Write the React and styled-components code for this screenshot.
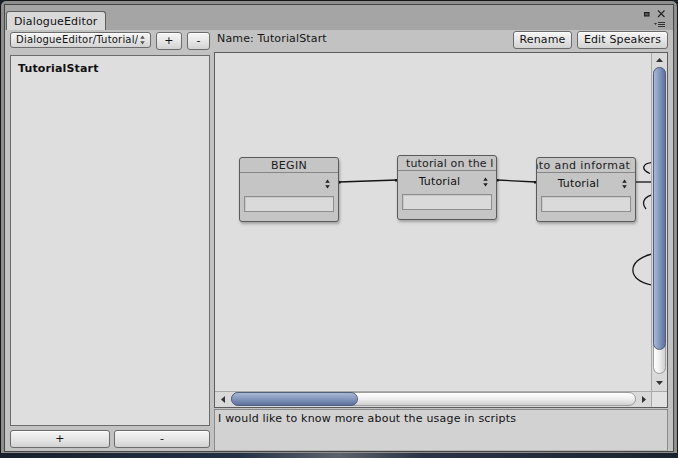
import React from 'react';
import styled, { createGlobalStyle } from 'styled-components';

const Global = createGlobalStyle`
  html, body { margin: 0; padding: 0; }
  body {
    background: linear-gradient(to right, #18202c 0%, #233044 35%, #5d636c 50%, #2a3446 62%, #1a222e 100%);
    font-family: "DejaVu Sans", Verdana, sans-serif;
    font-size: 11px;
    color: #141414;
    letter-spacing: 0.15px;
  }
  #root { width: 678px; height: 458px; }
`;

const Window = styled.div`
  box-sizing: border-box;
  width: 678px;
  height: 453px;
  padding: 3px 3px 1px 3px;
  background: #8e8e8e;
  border: 1px solid #151515;
  border-bottom: none;
  border-radius: 6px 6px 0 0;
  display: flex;
`;

const Panel = styled.div`
  flex: 1;
  display: flex;
  flex-direction: column;
  border: 1px solid #454545;
  background: #c2c2c2;
  min-width: 0;
`;

const TabStrip = styled.div`
  height: 25px;
  flex: 0 0 25px;
  background: #a5a5a5;
  display: flex;
  align-items: flex-start;
  justify-content: space-between;
`;

const Tab = styled.div`
  margin: 6px 0 0 1px;
  width: 100px;
  height: 19px;
  box-sizing: border-box;
  background: #d9d9d9;
  border: 1px solid #5e5e5e;
  border-bottom: none;
  border-radius: 3px 3px 0 0;
  padding: 2px 0 0 7px;
  line-height: 15px;
  color: #111;
`;

const Controls = styled.svg`
  margin: 4px 6px 0 0;
  display: block;
`;

const Body = styled.div`
  flex: 1;
  min-height: 0;
  display: grid;
  grid-template-columns: 200px 454px;
  column-gap: 4px;
  padding: 1px 5px 0 5px;
`;

const Column = styled.div`
  display: flex;
  flex-direction: column;
  min-height: 0;
`;

const ToolRow = styled.div`
  display: flex;
  align-items: flex-start;
  gap: 5px;
  height: 18px;
  margin-top: 1px;
`;

const Button = styled.button`
  box-sizing: border-box;
  width: ${p => (p.$w ? `${p.$w}px` : 'auto')};
  height: ${p => p.$h || 18}px;
  padding: 0 ${p => (p.$pad ?? 5)}px;
  margin: 0;
  font: inherit;
  font-size: ${p => p.$fs || 11}px;
  letter-spacing: ${p => (p.$ls != null ? `${p.$ls}px` : 'inherit')};
  color: #111;
  background: linear-gradient(to bottom, #f6f6f6 0%, #e6e6e6 50%, #d2d2d2 100%);
  border: 1px solid #6b6b6b;
  border-radius: 3px;
  box-shadow: inset 0 1px 0 #ffffff;
  display: flex;
  align-items: center;
  justify-content: ${p => p.$justify || 'center'};
  gap: 2px;
  line-height: 14px;
  white-space: nowrap;
  overflow: hidden;
  flex-shrink: 0;
`;

const DropLabel = styled.span`
  flex: 1;
  min-width: 0;
  overflow: hidden;
  text-align: left;
`;

const ListPanel = styled.div`
  flex: 1;
  margin-top: 5px;
  background: #dedede;
  border: 1px solid #6b6b6b;
  padding: 6px 7px;
`;

const ListItem = styled.div`
  font-weight: bold;
  line-height: 14px;
  color: #111;
`;

const BottomRow = styled.div`
  display: grid;
  grid-template-columns: 100px 96px;
  column-gap: 4px;
  margin: 4px 0 3px 0;
`;

const HeaderRow = styled.div`
  height: 19px;
  flex: 0 0 19px;
  display: flex;
  align-items: flex-start;
  gap: 5px;
`;

const NameLabel = styled.div`
  padding: 1px 0 0 3px;
  line-height: 13px;
  flex: 1;
  color: #141414;
`;

const Canvas = styled.div`
  flex: 1;
  margin-top: 2px;
  border: 1px solid #5c5c5c;
  display: grid;
  grid-template-columns: 1fr 16px;
  grid-template-rows: 1fr 16px;
  min-height: 0;
`;

const Viewport = styled.div`
  position: relative;
  overflow: hidden;
  background: #dedede;
`;

const Wires = styled.svg`
  position: absolute;
  left: 0;
  top: 0;
  pointer-events: none;
  fill: none;
  stroke: #141414;
  stroke-width: 1.3;
`;

const Node = styled.div`
  position: absolute;
  left: ${p => p.$x}px;
  top: ${p => p.$y}px;
  width: 100px;
  height: 65px;
  box-sizing: border-box;
  border: 1px solid #5a5a5a;
  border-radius: 3px;
  background: #c5c5c5;
  box-shadow: 1px 2px 3px rgba(0, 0, 0, 0.28);
  display: flex;
  flex-direction: column;
`;

const NodeHeader = styled.div`
  height: 14px;
  flex: 0 0 14px;
  border-bottom: 1px solid #868686;
  display: flex;
  padding: 0 ${p => p.$clipRight}px 0 ${p => p.$clipLeft}px;
`;

const TitleClip = styled.div`
  flex: 1;
  overflow: hidden;
  white-space: nowrap;
  line-height: 15px;
  text-align: ${p => (p.$center ? 'center' : 'left')};
  color: #1c1c1c;
  letter-spacing: ${p => p.$ls}px;
`;

const TitleText = styled.span`
  display: inline-block;
  margin-left: ${p => p.$shift || 0}px;
`;

const NodeRow = styled.div`
  height: 22px;
  flex: 0 0 22px;
  display: flex;
  align-items: center;
  gap: 2px;
  padding-right: 8px;
`;

const NodeValue = styled.div`
  flex: 1;
  text-align: center;
  line-height: 14px;
  color: #111;
`;

const NodeInput = styled.div`
  margin: 1px 4px 0 4px;
  height: 16px;
  box-sizing: border-box;
  border: 1px solid #8e8e8e;
  background: #dadada;
  box-shadow: inset 1px 1px 0 #c8c8c8;
`;

const UpDownSvg = styled.svg`
  display: block;
  flex: 0 0 auto;
`;

const ScrollBar = styled.div`
  display: flex;
  flex-direction: ${p => (p.$vertical ? 'column' : 'row')};
  background: #d9d9d9;
  ${p =>
    p.$vertical
      ? 'border-left: 1px solid #a9a9a9; padding: 0 1px;'
      : 'border-top: 1px solid #a9a9a9; padding: 0 0 1px 0;'}
`;

const ArrowCell = styled.div`
  flex: 0 0 ${p => p.$size}px;
  display: flex;
  align-items: center;
  justify-content: center;
`;

const Track = styled.div`
  flex: 1;
  display: flex;
  flex-direction: ${p => (p.$vertical ? 'column' : 'row')};
  border: 1px solid #9d9d9d;
  border-radius: 7px;
  background: linear-gradient(
    ${p => (p.$vertical ? 'to right' : 'to bottom')},
    #ffffff 0%,
    #f0f0f0 45%,
    #d0d0d0 100%
  );
`;

const Thumb = styled.div`
  flex: 0 0 ${p => p.$pct}%;
  margin: -1px;
  border: 1px solid #4f5f7e;
  border-radius: 7px;
  background: linear-gradient(
    ${p => (p.$vertical ? 'to right' : 'to bottom')},
    #aab8d2 0%,
    #8a9dc2 40%,
    #7388b0 70%,
    #5d7098 100%
  );
`;

const Corner = styled.div`
  background: #e2e2e2;
  border-left: 1px solid #a9a9a9;
  border-top: 1px solid #a9a9a9;
`;

const TextBox = styled.div`
  margin-top: 1px;
  height: 42px;
  flex: 0 0 42px;
  box-sizing: border-box;
  border: 1px solid #8a8a8a;
  border-bottom-color: #b4b4b4;
  background: #d2d2d2;
  padding: 2px 3px;
  line-height: 14px;
  letter-spacing: 0.2px;
  color: #111;
`;

const UpDown = ({ color = '#222' }) => (
  <UpDownSvg width="5" height="10" viewBox="0 0 5 10">
    <path d="M2.5 0.5 L4.8 3.8 L0.2 3.8 Z" fill={color} />
    <path d="M2.5 9.5 L4.8 6.2 L0.2 6.2 Z" fill={color} />
  </UpDownSvg>
);

const Tri = ({ dir }) => {
  const paths = {
    up: 'M3.5 0 L7 4 L0 4 Z',
    down: 'M0 0 L7 0 L3.5 4 Z',
    left: 'M4 0 L4 7 L0 3.5 Z',
    right: 'M0 0 L4 3.5 L0 7 Z',
  };
  const v = dir === 'up' || dir === 'down';
  return (
    <svg width={v ? 7 : 4} height={v ? 4 : 7} viewBox={v ? '0 0 7 4' : '0 0 4 7'} style={{ display: 'block' }}>
      <path d={paths[dir]} fill="#333" />
    </svg>
  );
};

const nodes = [
  { x: 24, y: 104, title: 'BEGIN', center: true, value: '', clipLeft: 0, clipRight: 0, ls: 0.3 },
  { x: 182, y: 102, title: 'tutorial on the lessons', value: 'Tutorial', clipLeft: 8, clipRight: 2, ls: 0.15 },
  { x: 321, y: 104, title: 'into and information', value: 'Tutorial', clipLeft: 0, clipRight: 4, shift: -9, ls: 0.4 },
];

export default function App() {
  return (
    <>
      <Global />
      <Window>
        <Panel>
          <TabStrip>
            <Tab>DialogueEditor</Tab>
            <Controls width="24" height="20" viewBox="0 0 24 20">
              <rect x="1.5" y="3.5" width="4.5" height="3.5" fill="#555" stroke="#1a1a1a" strokeWidth="1" />
              <path d="M15 1.5 L21.5 8 M21.5 1.5 L15 8" stroke="#222" strokeWidth="1.1" fill="none" />
              <path d="M11 14 L14 14 L12.5 16 Z" fill="#333" />
              <path d="M15 13.5 H22 M15 15.5 H22 M15 17.5 H22" stroke="#333" strokeWidth="1" fill="none" />
            </Controls>
          </TabStrip>
          <Body>
            <Column>
              <ToolRow>
                <Button $w={141} $h={16} $fs={10} $ls={0.2} $justify="space-between" $pad={5}>
                  <DropLabel>DialogueEditor/Tutorial/Tutorial</DropLabel>
                  <UpDown color="#555" />
                </Button>
                <Button $w={26}>+</Button>
                <Button $w={23}>-</Button>
              </ToolRow>
              <ListPanel>
                <ListItem>TutorialStart</ListItem>
              </ListPanel>
              <BottomRow>
                <Button>+</Button>
                <Button>-</Button>
              </BottomRow>
            </Column>
            <Column>
              <HeaderRow>
                <NameLabel>Name: TutorialStart</NameLabel>
                <Button $w={59}>Rename</Button>
                <Button $w={91}>Edit Speakers</Button>
              </HeaderRow>
              <Canvas>
                <Viewport>
                  <Wires width="436" height="337" viewBox="0 0 436 337">
                    <path d="M124 129 L182 127" />
                    <path d="M282 127 L321 129" />
                    <path d="M421 129 L436 129" />
                    <path d="M437 109.5 C428 110.5 425 116 435 120.5" />
                    <path d="M437 142 C429 144 426 150 431 156" />
                    <path d="M437 201 C411 207 412 228 437 232" />
                    <rect x="123" y="128" width="2.5" height="2.5" fill="#141414" stroke="none" />
                    <rect x="180" y="126" width="2.5" height="2.5" fill="#141414" stroke="none" />
                    <rect x="281" y="126" width="2.5" height="2.5" fill="#141414" stroke="none" />
                    <rect x="319" y="128" width="2.5" height="2.5" fill="#141414" stroke="none" />
                  </Wires>
                  {nodes.map((n, i) => (
                    <Node key={i} $x={n.x} $y={n.y}>
                      <NodeHeader $clipLeft={n.clipLeft} $clipRight={n.clipRight}>
                        <TitleClip $center={n.center} $ls={n.ls}>
                          <TitleText $shift={n.shift}>{n.title}</TitleText>
                        </TitleClip>
                      </NodeHeader>
                      <NodeRow>
                        <NodeValue>{n.value}</NodeValue>
                        <UpDown />
                      </NodeRow>
                      <NodeInput />
                    </Node>
                  ))}
                </Viewport>
                <ScrollBar $vertical>
                  <ArrowCell $size={14}><Tri dir="up" /></ArrowCell>
                  <Track $vertical>
                    <Thumb $vertical $pct={92} />
                  </Track>
                  <ArrowCell $size={17}><Tri dir="down" /></ArrowCell>
                </ScrollBar>
                <ScrollBar>
                  <ArrowCell $size={16}><Tri dir="left" /></ArrowCell>
                  <Track>
                    <Thumb $pct={31} />
                  </Track>
                  <ArrowCell $size={15}><Tri dir="right" /></ArrowCell>
                </ScrollBar>
                <Corner />
              </Canvas>
              <TextBox>I would like to know more about the usage in scripts</TextBox>
            </Column>
          </Body>
        </Panel>
      </Window>
    </>
  );
}
